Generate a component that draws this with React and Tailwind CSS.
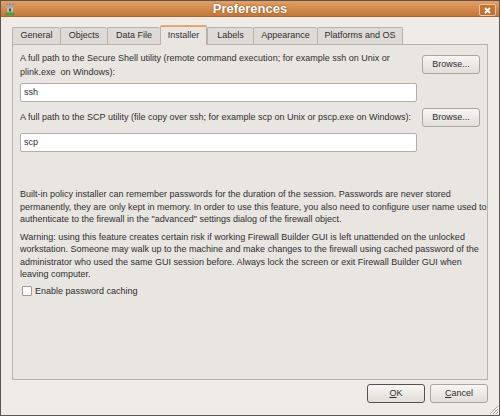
import React from "react";

const tabs = [
  { label: "General", w: "w-[48px]" },
  { label: "Objects", w: "w-[47px]" },
  { label: "Data File", w: "w-[53px]" },
  { label: "Installer", w: "w-[47px]", active: true },
  { label: "Labels", w: "w-[46px]" },
  { label: "Appearance", w: "w-[64px]" },
  { label: "Platforms and OS", w: "w-[86px]" },
];

const TowerIcon = () => (
  <svg width="10" height="13" viewBox="0 0 10 13">
    <rect x="1" y="0.5" width="2" height="2" fill="#8d9390" />
    <rect x="4" y="0.5" width="2" height="2" fill="#8d9390" />
    <rect x="7" y="0.5" width="2" height="2" fill="#8d9390" />
    <rect x="1" y="2.5" width="8" height="2" fill="#a7aca9" />
    <rect x="2" y="4.5" width="6" height="5" fill="#b9bdba" />
    <rect x="4" y="5.5" width="2" height="3" fill="#4d524f" />
    <rect x="0.5" y="9.5" width="9" height="3" fill="#4f9a3a" />
  </svg>
);

const Grip = () => (
  <svg width="12" height="12" viewBox="0 0 12 12">
    <path d="M11 3 L3 11 M11 6 L6 11 M11 9 L9 11" stroke="#a8a39c" strokeWidth="1" />
    <path d="M11 4 L4 11 M11 7 L7 11 M11 10 L10 11" stroke="#ffffff" strokeWidth="1" />
  </svg>
);

const Button = ({ children, isDefault, className = "" }) => (
  <button
    className={
      "h-[19px] w-[58px] rounded-[3px] border bg-gradient-to-b from-[#f7f6f4] to-[#e2ded9] text-[9px] text-[#2e2e2e] leading-none flex items-center justify-center " +
      (isDefault ? "border-[#55524d]" : "border-[#aaa59e]") +
      " " +
      className
    }
  >
    {children}
  </button>
);

const Line = ({ children }) => (
  <span className="block whitespace-pre">{children}</span>
);

export default function App() {
  return (
    <div className="w-[500px] h-[416px] flex flex-col bg-[#efebe7] border border-[#5a5753] font-['Liberation_Sans',Arial,sans-serif] text-[#2e2e2e] overflow-hidden">
      {/* title bar */}
      <div className="relative h-[16px] flex items-center justify-center bg-gradient-to-b from-[#e2a066] to-[#c67736] border-b border-[#a9652f]">
        <div className="absolute left-[4px] top-[2px]">
          <TowerIcon />
        </div>
        <span className="text-[13px] font-bold text-white leading-none [text-shadow:0_0_2px_#7a4518]">
          Preferences
        </span>
        <div className="absolute right-[3px] top-[3px] w-[17px] h-[12px] rounded-[2px] border border-[#f0c49a] bg-[#c27334] flex items-center justify-center">
          <svg width="7" height="7" viewBox="0 0 7 7">
            <path d="M1 1 L6 6 M6 1 L1 6" stroke="#ffffff" strokeWidth="1.8" />
          </svg>
        </div>
      </div>

      {/* body */}
      <div className="flex-1 flex flex-col px-[11px] pt-[9px]">
        <div className="flex items-end h-[18px]">
          {tabs.map((t, i) =>
            t.active ? (
              <div
                key={t.label}
                className={`${t.w} relative z-10 -mb-px h-[20px] flex items-center justify-center border-l border-r border-[#b7b2ab] border-t-2 border-t-[#eba565] bg-[#e9e6e2] text-[9px] rounded-t-[2px]`}
              >
                {t.label}
              </div>
            ) : (
              <div
                key={t.label}
                className={`${t.w} h-[17px] flex items-center justify-center border-t border-l border-[#b7b2ab] bg-[#dedad5] text-[9px] rounded-t-[2px] ${
                  i === tabs.length - 1 ? "border-r" : ""
                }`}
              >
                {t.label}
              </div>
            )
          )}
        </div>

        <div className="h-[336px] border border-[#b7b2ab] bg-[#e9e6e2] pl-[7px] pr-[7px] pt-[6px] text-[9px] leading-[12.5px]">
          <div className="flex items-center justify-between h-[27px]">
            <div className="leading-[14px]">
              <Line>A full path to the Secure Shell utility (remote command execution; for example ssh on Unix or</Line>
              <Line>plink.exe  on Windows):</Line>
            </div>
            <Button>Browse...</Button>
          </div>
          <div className="mt-[5px] w-[397px] h-[19px] bg-white border border-[#b3aea7] rounded-[2px] flex items-center pl-[3px]">
            ssh
          </div>

          <div className="mt-[6px] flex items-center justify-between h-[19px]">
            <Line>A full path to the SCP utility (file copy over ssh; for example scp on Unix or pscp.exe on Windows):</Line>
            <Button>Browse...</Button>
          </div>
          <div className="mt-[6px] w-[397px] h-[19px] bg-white border border-[#b3aea7] rounded-[2px] flex items-center pl-[3px]">
            scp
          </div>

          <div className="mt-[36px]">
            <Line>Built-in policy installer can remember passwords for the duration of the session. Passwords are never stored</Line>
            <Line>permanently, they are only kept in memory. In order to use this feature, you also need to configure user name used to</Line>
            <Line>authenticate to the firewall in the "advanced" settings dialog of the firewall object.</Line>
          </div>
          <div className="mt-[5px]">
            <Line>Warning: using this feature creates certain risk if working Firewall Builder GUI is left unattended on the unlocked</Line>
            <Line>workstation. Someone may walk up to the machine and make changes to the firewall using cached password of the</Line>
            <Line>administrator who used the same GUI session before. Always lock the screen or exit Firewall Builder GUI when</Line>
            <Line>leaving computer.</Line>
          </div>

          <div className="mt-[4px] flex items-center h-[13px]">
            <div className="ml-[2px] w-[10px] h-[10px] bg-white border border-[#a19c94] rounded-[1px]" />
            <span className="ml-[3px]">Enable password caching</span>
          </div>
        </div>

        <div className="mt-[4px] flex justify-end gap-[5px]">
          <Button isDefault>
            <span className="underline underline-offset-1">O</span>K
          </Button>
          <Button>
            <span className="underline underline-offset-1">C</span>ancel
          </Button>
        </div>
        <div className="flex-1 flex justify-end items-end -mr-[11px]">
          <Grip />
        </div>
      </div>
    </div>
  );
}
